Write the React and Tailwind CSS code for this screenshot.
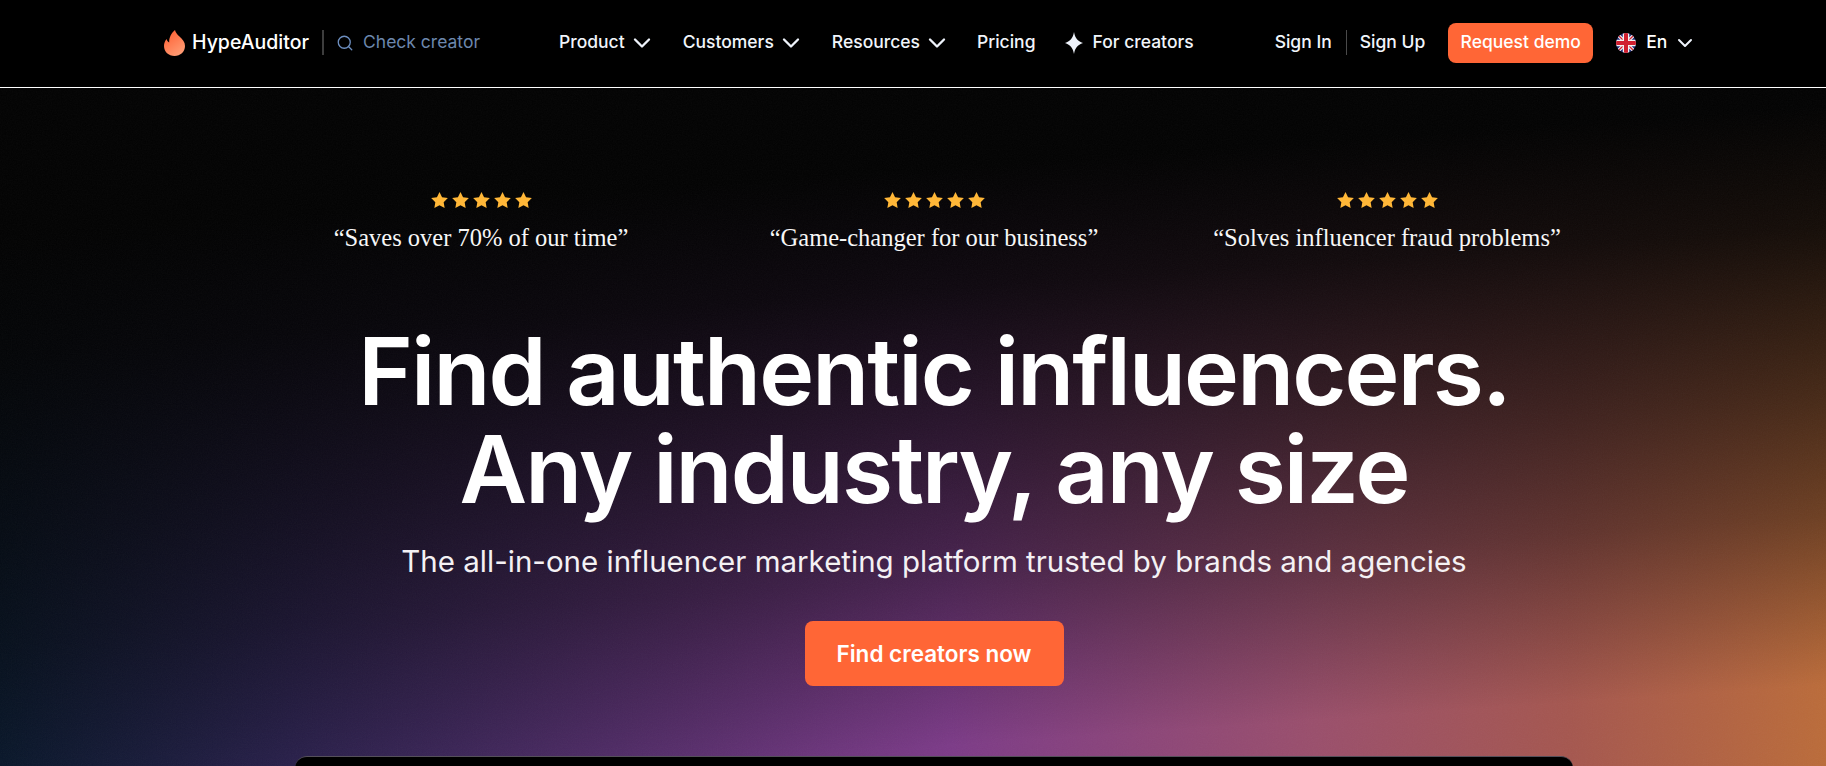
import { ChevronDown, Search } from 'lucide-react';

const navItems = ['Product', 'Customers', 'Resources'];

const reviews = [
  'Saves over 70% of our time',
  'Game-changer for our business',
  'Solves influencer fraud problems',
];

function Flame() {
  return (
    <svg width="21" height="26" viewBox="0 0 21 26" className="shrink-0">
      <defs>
        <linearGradient id="flame-fill" x1="0" y1="0" x2="0.6" y2="1">
          <stop offset="0" stopColor="#ff5a2c" />
          <stop offset="1" stopColor="#ff9a72" />
        </linearGradient>
      </defs>
      <path
        fill="url(#flame-fill)"
        d="M11 0c.5 2.500 2 4.300 4.500 6.500C18.800 9.400 21 12.300 21 16c0 5.800-4.600 10-10.500 10S0 21.800 0 16c0-2.700 1-5 2.600-7 .3 1.600 1.100 2.800 2.600 3.400C5 7.600 7.300 3 11 0z"
      />
    </svg>
  );
}

function Flag() {
  return (
    <svg width="20" height="20" viewBox="0 0 20 20" className="shrink-0">
      <clipPath id="flag-clip">
        <circle cx="10" cy="10" r="10" />
      </clipPath>
      <g clipPath="url(#flag-clip)">
        <rect width="20" height="20" fill="#1f2a78" />
        <path d="M0 0L20 20M20 0L0 20" stroke="#f2f2f2" strokeWidth="3.500" />
        <path d="M0 0L20 20M20 0L0 20" stroke="#d01f2f" strokeWidth="1.250" />
        <path d="M10 0V20M0 10H20" stroke="#f2f2f2" strokeWidth="6.500" />
        <path d="M10 0V20M0 10H20" stroke="#d01f2f" strokeWidth="4" />
      </g>
    </svg>
  );
}

function Sparkle() {
  return (
    <svg width="18" height="22" viewBox="0 0 18 22" className="shrink-0">
      <path fill="#eef3fb" d="M9 0c1 6 3.500 9 9 11-5.500 2-8 5-9 11-1-6-3.500-9-9-11C5.500 9 8 6 9 0z" />
    </svg>
  );
}

function Stars() {
  return (
    <div className="flex gap-[4px]">
      {[0, 1, 2, 3, 4].map((i) => (
        <svg key={i} width="17" height="16" viewBox="0 0 24 23">
          <path
            fill="#ffb738"
            d="M12 0l3.700 7.600 8.300 1.200-6 5.800 1.400 8.300L12 19l-7.400 3.900L6 14.600 0 8.800l8.300-1.200z"
          />
        </svg>
      ))}
    </div>
  );
}

function Header() {
  return (
    <header className="relative z-10 flex h-[88px] items-center border-b border-white bg-black pb-[2px] pl-[164px] font-['Inter',sans-serif] text-[17.500px] font-medium text-[#f1f5fb]">
      <Flame />
      <span className="ml-[7px] text-[19.500px] text-white">HypeAuditor</span>
      <span className="ml-[13px] h-[25px] w-[2px] bg-[#3d3d3d]" />
      <Search size={18} strokeWidth={1.750} className="ml-[12px] text-[#6d8fc0]" />
      <span className="ml-[9px] text-[17.500px] font-normal text-[#6c87ad]">Check creator</span>

      <div className="ml-[79px] flex items-center gap-[27px]">
        {navItems.map((item) => (
          <div key={item} className="flex items-center">
            <span>{item}</span>
            <ChevronDown size={28} strokeWidth={2} className="ml-[3px] text-[#eef3fb]" />
          </div>
        ))}
      </div>

      <span className="ml-[26px]">Pricing</span>
      <span className="ml-[29px]"><Sparkle /></span>
      <span className="ml-[10px]">For creators</span>

      <span className="ml-[81px]">Sign In</span>
      <span className="ml-[14px] mr-[13px] h-[25px] w-px bg-[#4a4a4a]" />
      <span>Sign Up</span>
      <button className="ml-[23px] h-[40px] w-[145px] rounded-[8px] bg-[#ff6636] text-white">Request demo</button>
      <span className="ml-[23px]"><Flag /></span>
      <span className="ml-[10px] text-white">En</span>
      <ChevronDown size={24} strokeWidth={2} className="ml-[6px] text-[#eef3fb]" />
    </header>
  );
}

function App() {
  return (
    <div className="relative h-[766px] w-full overflow-hidden bg-black">
      <Header />
      <main className="relative h-[678px] w-full overflow-hidden bg-[linear-gradient(176deg,rgb(2,2,2)_18%,rgba(2,2,2,0.9)_33%,rgba(2,2,2,0.75)_45%,rgba(2,2,2,0.62)_55%,rgba(2,2,2,0.42)_69%,rgba(2,2,2,0.2)_80%,rgba(2,2,2,0)_90%),linear-gradient(90deg,#0a1a30_0%,#2c2250_16%,#5c3070_38%,#7c3b88_52%,#9a4f6c_72%,#a5574f_86%,#bb6c3a_100%)]">
        <svg className="pointer-events-none absolute inset-0 h-full w-full opacity-[0.04]">
          <filter id="grain">
            <feTurbulence type="fractalNoise" baseFrequency="0.8" numOctaves="2" stitchTiles="stitch" />
            <feColorMatrix type="saturate" values="0" />
          </filter>
          <rect width="100%" height="100%" filter="url(#grain)" />
        </svg>
        <div className="relative flex w-[1868px] flex-col items-center pt-[104px] text-white">
          <div className="grid w-[1359px] grid-cols-3">
            {reviews.map((text) => (
              <div key={text} className="flex flex-col items-center gap-[16px]">
                <Stars />
                <p className="font-['Liberation_Serif',serif] text-[24.500px] leading-[28px] text-[#f7f7f7]">
                  “{text}”
                </p>
              </div>
            ))}
          </div>
          <h1 className="mt-[70px] text-center font-['Inter',sans-serif] text-[93px] font-semibold leading-[98px] tracking-[-0.02em]">
            Find authentic influencers.
            <br />
            Any industry, any size
          </h1>
          <p className="mt-[23px] font-['Inter',sans-serif] text-[29.500px] leading-[40px] text-[#f4f1f4]">
            The all-in-one influencer marketing platform trusted by brands and agencies
          </p>
          <button className="mt-[40px] h-[65px] w-[259px] rounded-[8px] bg-[#ff6636] font-['Inter',sans-serif] text-[22.500px] font-semibold text-white">
            Find creators now
          </button>
          <div className="mt-[70px] h-[60px] w-[1278px] rounded-t-[12px] border-t border-[#55505a] bg-black" />
        </div>
      </main>
    </div>
  );
}

export default App;
